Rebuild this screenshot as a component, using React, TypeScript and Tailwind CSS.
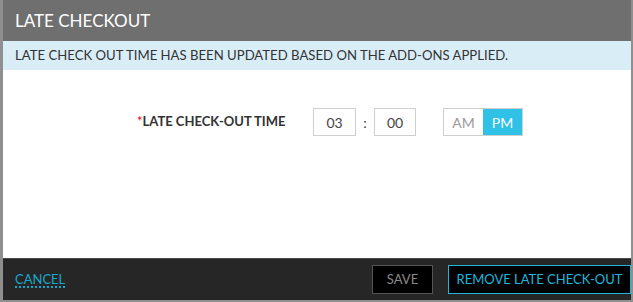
import React from 'react';

const App: React.FC = () => {
  return (
    <div
      className="w-[633px] h-[302px] bg-[#8f8f8f] pl-[3px] pr-[2px] overflow-hidden"
      style={{ fontFamily: 'Lato, "Open Sans", sans-serif' }}
    >
      <div className="flex flex-col h-[300px] bg-white">
        <div className="h-[41px] bg-[#6f6f6f] flex items-center px-3">
          <h2 className="text-white text-[17px] leading-none">LATE CHECKOUT</h2>
        </div>

        <div className="h-[29px] bg-[#d9edf7] flex items-center px-3">
          <p className="text-[#333] text-[13.15px]">
            LATE CHECK OUT TIME HAS BEEN UPDATED BASED ON THE ADD-ONS APPLIED.
          </p>
        </div>

        <div className="flex-1 pt-[38px]">
          <div className="flex items-center">
            <label className="ml-[134px] w-[176px] text-[13px] font-bold text-[#333]">
              <span className="text-red-600 font-normal">*</span>LATE CHECK-OUT TIME
            </label>
            <div className="w-[43px] h-[28px] border border-[#cfcfcf] flex items-center justify-center text-[14px] text-[#444]">
              03
            </div>
            <span className="w-[18px] text-center text-[14px] text-[#444]">:</span>
            <div className="w-[42px] h-[28px] border border-[#cfcfcf] flex items-center justify-center text-[14px] text-[#444]">
              00
            </div>
            <div className="ml-[27px] flex h-[28px] border border-[#cfcfcf]">
              <button className="w-[39px] text-[14px] text-[#9a9a9a] bg-white">AM</button>
              <button className="w-[39px] text-[14px] text-white bg-[#2fc1e6]">PM</button>
            </div>
          </div>
        </div>

        <div className="h-[42px] bg-[#262626] border-t border-[#4a4a4a] flex items-center pl-3">
          <a
            href="#"
            className="text-[13px] text-[#1aa6c9] underline decoration-dotted decoration-2 underline-offset-[3px]"
          >
            CANCEL
          </a>
          <button className="ml-auto w-[61px] h-[29px] bg-black border border-[#555] text-[13px] text-[#8a8a8a]">
            SAVE
          </button>
          <button className="ml-[15px] w-[183px] h-[29px] bg-black border border-[#1fb6dc] text-[13px] text-[#1fb6dc]">
            REMOVE LATE CHECK-OUT
          </button>
        </div>
      </div>
    </div>
  );
};

export default App;
